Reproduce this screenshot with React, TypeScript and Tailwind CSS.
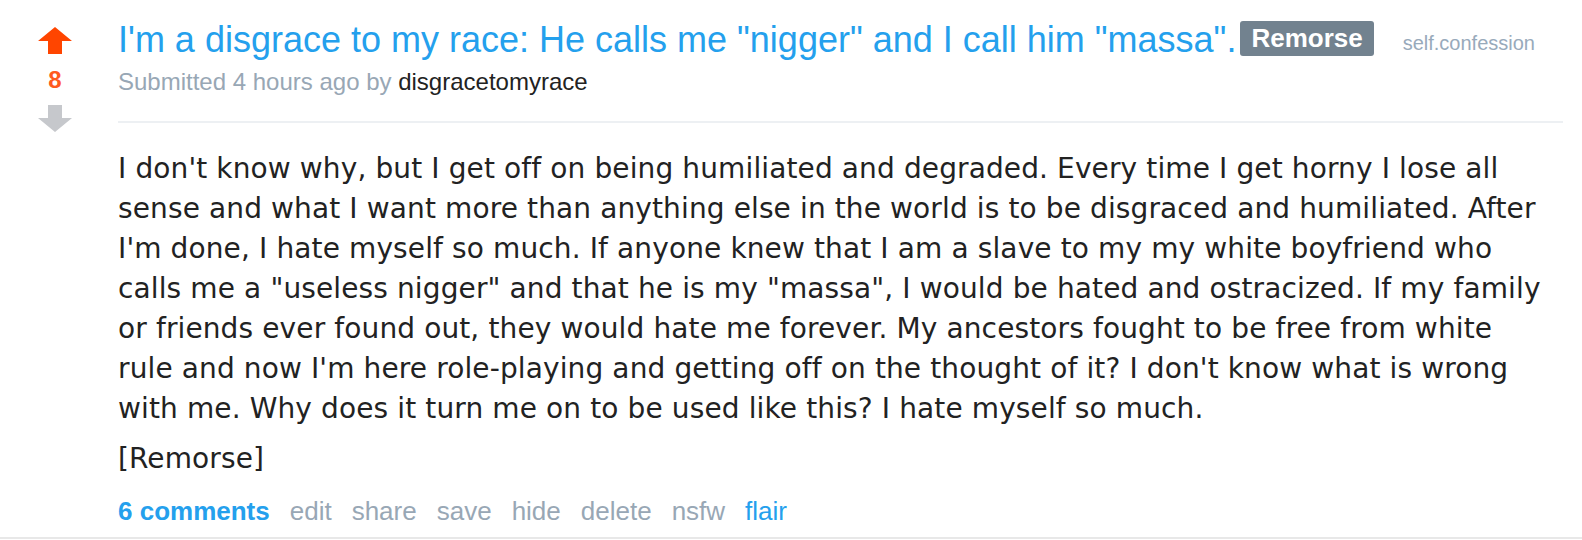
import React from "react";

const bodyLines = [
  "I don't know why, but I get off on being humiliated and degraded. Every time I get horny I lose all",
  "sense and what I want more than anything else in the world is to be disgraced and humiliated. After",
  "I'm done, I hate myself so much. If anyone knew that I am a slave to my my white boyfriend who",
  "calls me a \"useless nigger\" and that he is my \"massa\", I would be hated and ostracized. If my family",
  "or friends ever found out, they would hate me forever. My ancestors fought to be free from white",
  "rule and now I'm here role-playing and getting off on the thought of it? I don't know what is wrong",
  "with me. Why does it turn me on to be used like this? I hate myself so much.",
];

function Arrow({ up, color }: { up: boolean; color: string }) {
  return (
    <svg width="34" height="27" viewBox="0 0 34 27" className={up ? "" : "rotate-180"}>
      <path d="M17 0 L34 14 L24 14 L24 27 L10 27 L10 14 L0 14 Z" fill={color} />
    </svg>
  );
}

export default function App() {
  const helv = { fontFamily: '"Liberation Sans", Arial, sans-serif' };
  return (
    <div className="w-[1582px] h-[540px] bg-white overflow-hidden" style={helv}>
      <div className="flex border-b-2 border-[#e8e8e8] h-[539px]">
        <div className="w-[110px] flex flex-col items-center pt-[27px] shrink-0">
          <Arrow up color="#ff4500" />
          <div className="text-[#ff5a1f] font-bold text-[24px] leading-[24px] mt-[14px]">8</div>
          <div className="mt-[13px]">
            <Arrow up={false} color="#c6c8cc" />
          </div>
        </div>
        <div className="ml-[8px] flex-1 pr-[19px]">
          <div className="flex items-center pt-[20px] h-[60px]">
            <span className="text-[#24a0ed] text-[36px] leading-[40px] whitespace-nowrap">
              I'm a disgrace to my race: He calls me "nigger" and I call him "massa".
            </span>
            <span className="ml-[4px] bg-[#72828f] text-white font-bold text-[26px] leading-[35px] h-[35px] px-[11px] rounded-[3px] mt-[-4px]">
              Remorse
            </span>
            <span className="ml-[29px] text-[#98aabb] text-[20px] mt-[6px]">self.confession</span>
          </div>
          <div className="text-[24px] leading-[26px] mt-[9px] text-[#98a7b5]">
            Submitted 4 hours ago by <span className="text-[#222222]">disgracetomyrace</span>
          </div>
          <div className="h-[2px] bg-[#edf0f3] mt-[26px]" />
          <div
            className="mt-[26px] text-[#222222] text-[28px] leading-[40px] tracking-[0.12px]"
            style={{ fontFamily: '"DejaVu Sans", Verdana, sans-serif' }}
          >
            {bodyLines.map((l, i) => (
              <div key={i} className="whitespace-nowrap">{l}</div>
            ))}
            <div className="mt-[10px]">[Remorse]</div>
          </div>
          <div className="flex gap-[20px] mt-[17px] text-[26px] leading-[30px] text-[#98a7b5]">
            <span className="text-[#24a0ed] font-bold">6 comments</span>
            <span>edit</span>
            <span>share</span>
            <span>save</span>
            <span>hide</span>
            <span>delete</span>
            <span>nsfw</span>
            <span className="text-[#24a0ed]">flair</span>
          </div>
        </div>
      </div>
    </div>
  );
}
